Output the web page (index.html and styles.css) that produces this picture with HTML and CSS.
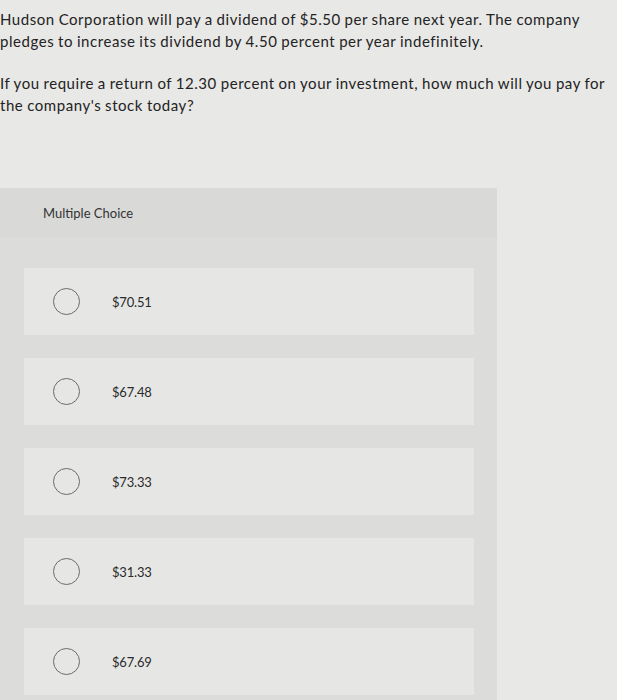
FILE: index.html
```html
<!DOCTYPE html>
<html>
<head>
<meta charset="utf-8">
<link rel="stylesheet" href="styles.css">
</head>
<body>
<div class="question">
  <p class="para p1">Hudson Corporation will pay a dividend of $5.50 per share next year. The company pledges to increase its dividend by 4.50 percent per year indefinitely.</p>
  <p class="para p2">If you require a return of 12.30 percent on your investment, how much will you pay for the company's stock today?</p>
</div>
<div class="panel">
  <div class="panel-head">Multiple Choice</div>
  <div class="options">
    <div class="option"><span class="radio"></span><span class="label">$70.51</span></div>
    <div class="option"><span class="radio"></span><span class="label">$67.48</span></div>
    <div class="option"><span class="radio"></span><span class="label">$73.33</span></div>
    <div class="option"><span class="radio"></span><span class="label">$31.33</span></div>
    <div class="option"><span class="radio"></span><span class="label">$67.69</span></div>
  </div>
</div>
</body>
</html>
```
FILE: styles.css
```css
html, body {
  margin: 0;
  padding: 0;
  background: #e8e8e6;
  overflow: hidden;
}
body {
  width: 617px;
  height: 700px;
  font-family: Lato, "Open Sans", sans-serif;
  color: #232323;
}
.question {
  padding-top: 8px;
  width: 617px;
}
.para {
  margin: 0;
  font-size: 15px;
  line-height: 22px;
  letter-spacing: 0.55px;
  word-spacing: -0.5px;
}
.p2 {
  margin-top: 20px;
}
.panel {
  margin-top: 72px;
  width: 497px;
  background: #dcdddb;
  height: 520px;
}
.panel-head {
  height: 49px;
  display: flex;
  align-items: center;
  padding-left: 43px;
  font-size: 13px;
  color: #333;
  background: #d9dad8;
}
.options {
  padding-top: 31px;
  display: flex;
  flex-direction: column;
  gap: 23px;
}
.option {
  margin-left: 24px;
  width: 450px;
  height: 67px;
  background: #e6e7e5;
  display: flex;
  align-items: center;
}
.radio {
  width: 27px;
  height: 27px;
  border: 1.5px solid #6a6a6a;
  border-radius: 50%;
  margin-left: 29px;
  box-sizing: border-box;
}
.label {
  margin-left: 32px;
  font-size: 13px;
  color: #2a2a2a;
  letter-spacing: -0.2px;
}
```
